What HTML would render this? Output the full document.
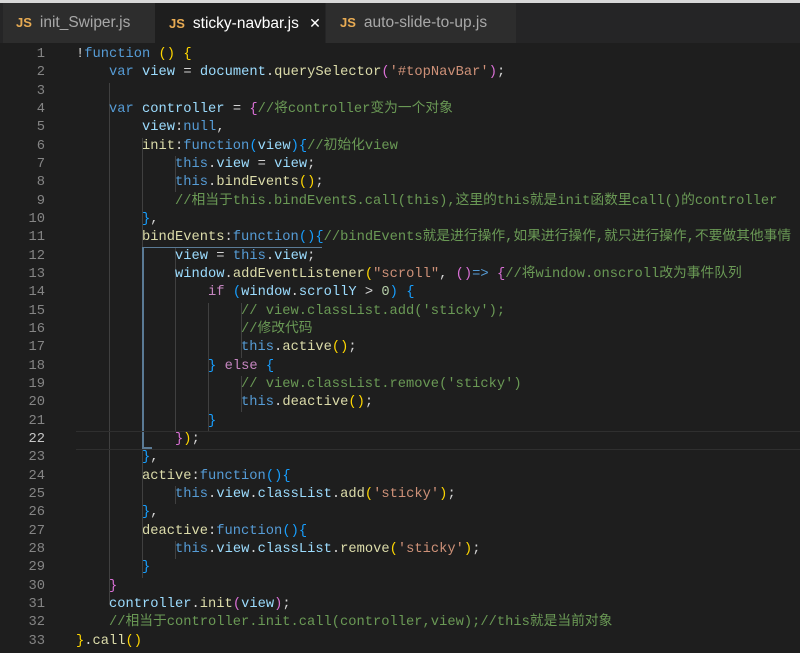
<!DOCTYPE html><html><head><meta charset="utf-8"><style>
body{margin:0;width:800px;height:653px;background:#1e1e1e;overflow:hidden;position:relative;font-family:"Liberation Mono","Noto Sans CJK SC",monospace}
.top{position:absolute;left:0;top:0;width:800px;height:3px;background:#d8d8d8}
.tabs{position:absolute;left:0;top:3px;width:800px;height:40px;background:#252526}
.tab{position:absolute;top:0;height:40px;line-height:40px;font-family:"Liberation Sans",sans-serif;font-size:15.5px;color:#a8a8a8;background:#2d2d2d}
.tab b{color:#e8ab53;font-size:13px;margin-right:8px;font-weight:bold}
.code{position:absolute;left:0;top:46px;width:800px}
.l{position:relative;height:18.34px;line-height:18.34px;font-size:13.75px;white-space:pre;color:#d4d4d4}
.n{position:absolute;left:0;width:45px;text-align:right;color:#858585}
.t{position:absolute;left:76px}
.k{color:#569cd6}.v{color:#9cdcfe}.f{color:#dcdcaa}.s{color:#ce9178}.c{color:#6a9955}.p{color:#c586c0}.num{color:#b5cea8}
.y{color:#ffd700}.o{color:#da70d6}.b{color:#179fff}
.g{position:absolute;width:1px;background:#404040}
</style></head><body>
<div class="top"></div>
<div class="tabs">
<div class="tab" style="left:3px;width:152px;padding-left:13px;box-sizing:border-box"><b>JS</b>init_Swiper.js</div>
<div class="tab" style="left:155px;width:170px;padding-left:14px;box-sizing:border-box;background:#1e1e1e;color:#fff"><b>JS</b>sticky-navbar.js <span style="margin-left:6px;font-size:14px">✕</span></div>
<div class="tab" style="left:326px;width:190px;padding-left:14px;box-sizing:border-box"><b>JS</b>auto-slide-to-up.js</div>
</div>
<div class="g" style="left:109px;top:83px;height:522px"></div>
<div class="g" style="left:142px;top:138px;height:440px"></div>
<div class="g" style="left:175px;top:156px;height:36px"></div>
<div class="g" style="left:175px;top:248px;height:184px"></div>
<div class="g" style="left:208px;top:303px;height:128px"></div>
<div class="g" style="left:241px;top:303px;height:55px"></div>
<div class="g" style="left:241px;top:376px;height:36px"></div>
<div class="g" style="left:175px;top:486px;height:18px"></div>
<div class="g" style="left:175px;top:541px;height:18px"></div>
<div style="position:absolute;left:142px;top:247px;width:2px;height:202px;background:#5a7a95"></div>
<div style="position:absolute;left:142px;top:247px;width:180px;height:1px;background:#5a7a95"></div>
<div style="position:absolute;left:142px;top:447px;width:10px;height:2px;background:#5a7a95"></div>
<div style="position:absolute;left:76px;top:431px;width:724px;height:17px;border-top:1px solid #2f2f2f;border-bottom:1px solid #2f2f2f"></div>
<div class="code">
<div class="l"><span class="n">1</span><span class="t">!<span class="k">function</span> <span class="y">()</span> <span class="y">{</span></span></div>
<div class="l"><span class="n">2</span><span class="t">    <span class="k">var</span> <span class="v">view</span> = <span class="v">document</span>.<span class="f">querySelector</span><span class="o">(</span><span class="s">'#topNavBar'</span><span class="o">)</span>;</span></div>
<div class="l"><span class="n">3</span><span class="t"></span></div>
<div class="l"><span class="n">4</span><span class="t">    <span class="k">var</span> <span class="v">controller</span> = <span class="o">{</span><span class="c">//将controller变为一个对象</span></span></div>
<div class="l"><span class="n">5</span><span class="t">        <span class="v">view</span>:<span class="k">null</span>,</span></div>
<div class="l"><span class="n">6</span><span class="t">        <span class="f">init</span>:<span class="k">function</span><span class="b">(</span><span class="v">view</span><span class="b">){</span><span class="c">//初始化view</span></span></div>
<div class="l"><span class="n">7</span><span class="t">            <span class="k">this</span>.<span class="v">view</span> = <span class="v">view</span>;</span></div>
<div class="l"><span class="n">8</span><span class="t">            <span class="k">this</span>.<span class="f">bindEvents</span><span class="y">()</span>;</span></div>
<div class="l"><span class="n">9</span><span class="t">            <span class="c">//相当于this.bindEventS.call(this),这里的this就是init函数里call()的controller</span></span></div>
<div class="l"><span class="n">10</span><span class="t">        <span class="b">}</span>,</span></div>
<div class="l"><span class="n">11</span><span class="t">        <span class="f">bindEvents</span>:<span class="k">function</span><span class="b">(){</span><span class="c">//bindEvents就是进行操作,如果进行操作,就只进行操作,不要做其他事情</span></span></div>
<div class="l"><span class="n">12</span><span class="t">            <span class="v">view</span> = <span class="k">this</span>.<span class="v">view</span>;</span></div>
<div class="l"><span class="n">13</span><span class="t">            <span class="v">window</span>.<span class="f">addEventListener</span><span class="y">(</span><span class="s">"scroll"</span>, <span class="o">()</span><span class="k">=&gt;</span> <span class="o">{</span><span class="c">//将window.onscroll改为事件队列</span></span></div>
<div class="l"><span class="n">14</span><span class="t">                <span class="p">if</span> <span class="b">(</span><span class="v">window</span>.<span class="v">scrollY</span> &gt; <span class="num">0</span><span class="b">)</span> <span class="b">{</span></span></div>
<div class="l"><span class="n">15</span><span class="t">                    <span class="c">// view.classList.add('sticky');</span></span></div>
<div class="l"><span class="n">16</span><span class="t">                    <span class="c">//修改代码</span></span></div>
<div class="l"><span class="n">17</span><span class="t">                    <span class="k">this</span>.<span class="f">active</span><span class="y">()</span>;</span></div>
<div class="l"><span class="n">18</span><span class="t">                <span class="b">}</span> <span class="p">else</span> <span class="b">{</span></span></div>
<div class="l"><span class="n">19</span><span class="t">                    <span class="c">// view.classList.remove('sticky')</span></span></div>
<div class="l"><span class="n">20</span><span class="t">                    <span class="k">this</span>.<span class="f">deactive</span><span class="y">()</span>;</span></div>
<div class="l"><span class="n">21</span><span class="t">                <span class="b">}</span></span></div>
<div class="l"><span class="n" style="color:#c6c6c6">22</span><span class="t">            <span class="o">}</span><span class="y">)</span>;</span></div>
<div class="l"><span class="n">23</span><span class="t">        <span class="b">}</span>,</span></div>
<div class="l"><span class="n">24</span><span class="t">        <span class="f">active</span>:<span class="k">function</span><span class="b">(){</span></span></div>
<div class="l"><span class="n">25</span><span class="t">            <span class="k">this</span>.<span class="v">view</span>.<span class="v">classList</span>.<span class="f">add</span><span class="y">(</span><span class="s">'sticky'</span><span class="y">)</span>;</span></div>
<div class="l"><span class="n">26</span><span class="t">        <span class="b">}</span>,</span></div>
<div class="l"><span class="n">27</span><span class="t">        <span class="f">deactive</span>:<span class="k">function</span><span class="b">(){</span></span></div>
<div class="l"><span class="n">28</span><span class="t">            <span class="k">this</span>.<span class="v">view</span>.<span class="v">classList</span>.<span class="f">remove</span><span class="y">(</span><span class="s">'sticky'</span><span class="y">)</span>;</span></div>
<div class="l"><span class="n">29</span><span class="t">        <span class="b">}</span></span></div>
<div class="l"><span class="n">30</span><span class="t">    <span class="o">}</span></span></div>
<div class="l"><span class="n">31</span><span class="t">    <span class="v">controller</span>.<span class="f">init</span><span class="o">(</span><span class="v">view</span><span class="o">)</span>;</span></div>
<div class="l"><span class="n">32</span><span class="t">    <span class="c">//相当于controller.init.call(controller,view);//this就是当前对象</span></span></div>
<div class="l"><span class="n">33</span><span class="t"><span class="y">}</span>.<span class="f">call</span><span class="y">()</span></span></div>
</div>
</body></html>
